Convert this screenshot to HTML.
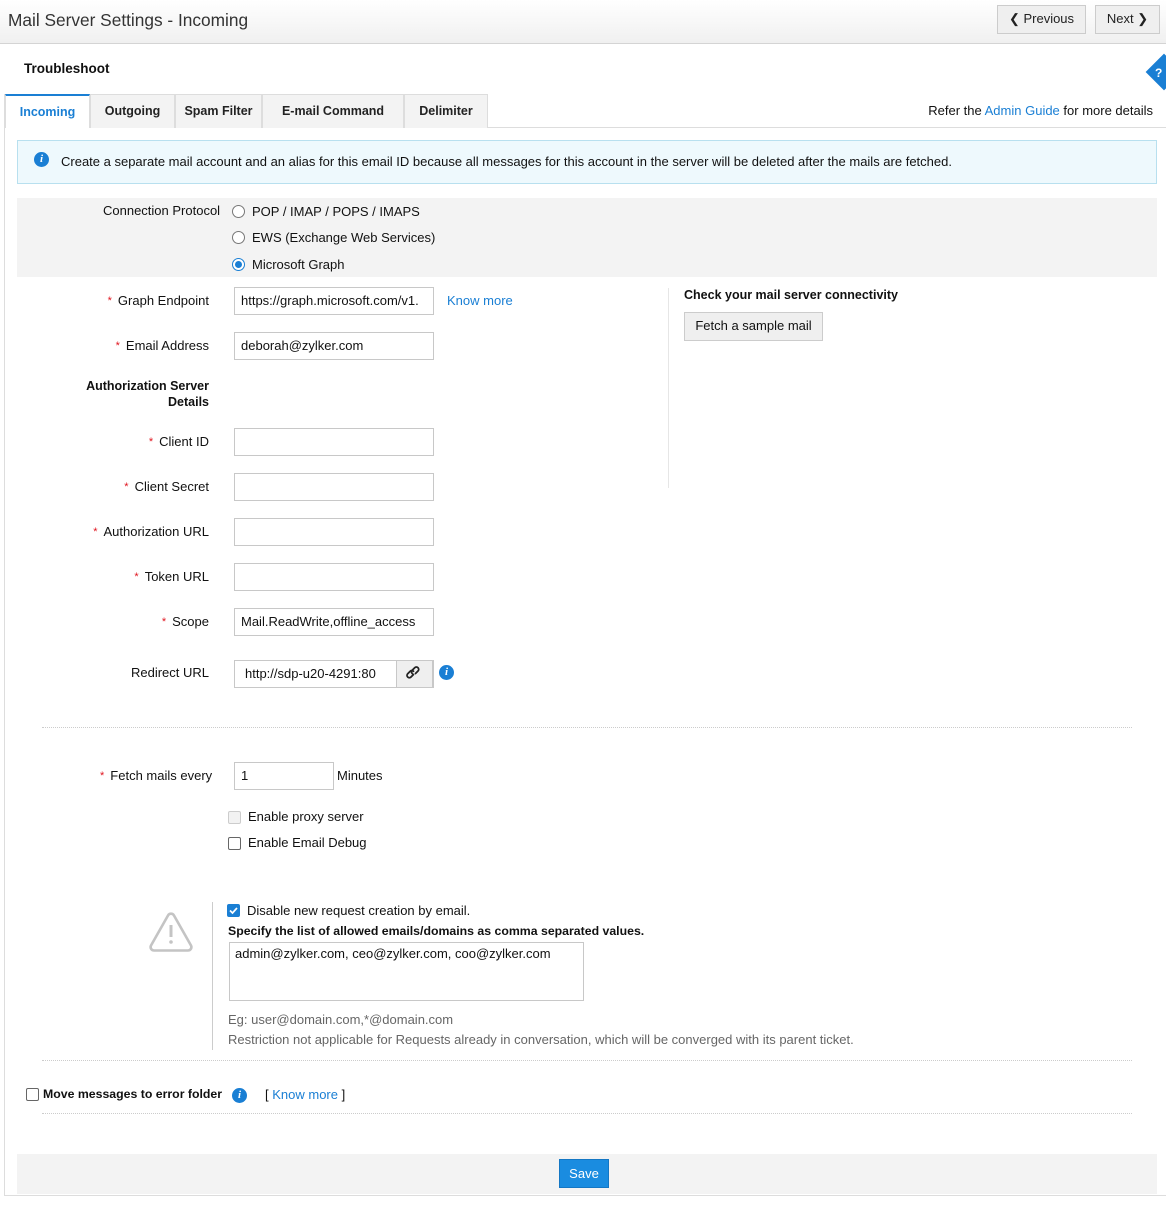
<!DOCTYPE html>
<html><head><meta charset="utf-8">
<style>
*{box-sizing:border-box;margin:0;padding:0}
body{width:1166px;height:1208px;position:relative;background:#fff;font-family:"Liberation Sans",Arial,sans-serif;font-size:13px;color:#111;overflow:hidden}
.a{position:absolute;white-space:nowrap}
.lbl{position:absolute;right:957px;white-space:nowrap;line-height:16px}
.req{color:#e0141e;font-size:11px;margin-right:6px;position:relative;top:-1px}
.inp{position:absolute;left:234px;width:200px;height:28px;border:1px solid #c8c8c8;background:#fff;padding:0 6px;line-height:26px;white-space:nowrap;overflow:hidden}
.btn{position:absolute;border:1px solid #ccc;background:#efefef;line-height:26px;text-align:center}
.tab{position:absolute;top:94px;height:34px;background:#f3f3f3;border:1px solid #ddd;border-bottom:none;font-weight:bold;font-size:12.5px;text-align:center;line-height:32px;color:#222}
.radio{position:absolute;left:232px;width:13px;height:13px;border:1px solid #777;border-radius:50%;background:#fff}
.cb{position:absolute;width:13px;height:13px;border:1px solid #666;border-radius:2px;background:#fff}
.dot{position:absolute;left:42px;width:1090px;border-top:1px dotted #ccc}
.blue{color:#1a7fd4}
.info{position:absolute;width:15px;height:15px;border-radius:50%;background:#1a7fd4;color:#fff;font:italic bold 11px "Liberation Serif",serif;text-align:center;line-height:15px}
</style></head><body>
<div class="a" style="left:0;top:0;width:1166px;height:44px;background:linear-gradient(#fff,#f0f0f0);border-bottom:1px solid #d4d4d4"></div>
<div class="a" style="left:8px;top:10px;font-size:17.3px;color:#333">Mail Server Settings - Incoming</div>
<div class="btn" style="left:997px;top:5px;width:89px;height:29px;color:#222">&#10094; Previous</div>
<div class="btn" style="left:1095px;top:5px;width:65px;height:29px;color:#222">Next &#10095;</div>
<div class="a" style="left:24px;top:61px;font-size:13.5px;font-weight:bold">Troubleshoot</div>
<div class="a" style="left:1151px;top:59px;width:26px;height:26px;background:#1a7fd4;transform:rotate(45deg)"></div>
<div class="a" style="left:1155px;top:66px;color:#fff;font-weight:bold;font-size:12px">?</div>
<div class="a" style="left:4px;top:94px;width:1px;height:1102px;background:#ddd"></div>
<div class="a" style="left:4px;top:1195px;width:1162px;height:1px;background:#ddd"></div>
<div class="a" style="left:90px;top:127px;width:1076px;height:1px;background:#ddd"></div>
<div class="tab" style="left:5px;width:85px;background:#fff;border-top:2px solid #1a7fd4;color:#1a7fd4">Incoming</div>
<div class="tab" style="left:90px;width:85px">Outgoing</div>
<div class="tab" style="left:175px;width:87px">Spam Filter</div>
<div class="tab" style="left:262px;width:142px">E-mail Command</div>
<div class="tab" style="left:404px;width:84px">Delimiter</div>
<div class="a" style="right:13px;top:103px">Refer the <span class="blue">Admin Guide</span> for more details</div>
<div class="a" style="left:17px;top:140px;width:1140px;height:44px;background:#eef9fd;border:1px solid #b8e0ef"></div>
<div class="info" style="left:34px;top:152px">i</div>
<div class="a" style="left:61px;top:154px">Create a separate mail account and an alias for this email ID because all messages for this account in the server will be deleted after the mails are fetched.</div>
<div class="a" style="left:17px;top:198px;width:1140px;height:79px;background:#f3f3f3"></div>
<div class="a" style="left:103px;top:203px">Connection Protocol</div>
<div class="radio" style="top:205px"></div><div class="a" style="left:252px;top:204px">POP / IMAP / POPS / IMAPS</div>
<div class="radio" style="top:231px"></div><div class="a" style="left:252px;top:230px">EWS (Exchange Web Services)</div>
<div class="radio" style="top:258px;border-color:#1a7fd4"><div style="position:absolute;left:2px;top:2px;width:7px;height:7px;border-radius:50%;background:#1a7fd4"></div></div><div class="a" style="left:252px;top:257px">Microsoft Graph</div>
<div class="lbl" style="top:293px"><span class="req">*</span>Graph Endpoint</div>
<div class="inp" style="top:287px">https://graph.microsoft.com/v1.</div>
<div class="a blue" style="left:447px;top:293px">Know more</div>
<div class="lbl" style="top:338px"><span class="req">*</span>Email Address</div>
<div class="inp" style="top:332px">deborah@zylker.com</div>
<div class="lbl" style="top:378px;font-weight:bold;font-size:12.5px;text-align:right;line-height:16px">Authorization Server<br>Details</div>
<div class="lbl" style="top:434px"><span class="req">*</span>Client ID</div><div class="inp" style="top:428px"></div>
<div class="lbl" style="top:479px"><span class="req">*</span>Client Secret</div><div class="inp" style="top:473px"></div>
<div class="lbl" style="top:524px"><span class="req">*</span>Authorization URL</div><div class="inp" style="top:518px"></div>
<div class="lbl" style="top:569px"><span class="req">*</span>Token URL</div><div class="inp" style="top:563px"></div>
<div class="lbl" style="top:614px"><span class="req">*</span>Scope</div><div class="inp" style="top:608px">Mail.ReadWrite,offline_access</div>
<div class="lbl" style="top:665px">Redirect URL</div>
<div class="inp" style="top:660px;padding-left:10px">http://sdp-u20-4291:80</div>
<div class="a" style="left:396px;top:660px;width:37px;height:28px;background:#efefef;border:1px solid #c8c8c8">
<svg width="35" height="26" viewBox="0 0 35 26"><g fill="none" stroke="#222" stroke-width="1.8" stroke-linecap="round"><path d="M16.5 13.5l-2.5 2.5a2.3 2.3 0 0 1-3.3-3.3l2.5-2.5a2.3 2.3 0 0 1 3.3 0"/><path d="M18.5 12.5l2.5-2.5a2.3 2.3 0 0 0-3.3-3.3l-2.5 2.5a2.3 2.3 0 0 0 0 3.3"/></g></svg></div>
<div class="info" style="left:439px;top:665px">i</div>
<div class="a" style="left:668px;top:288px;width:1px;height:200px;background:#e6e6e6"></div>
<div class="a" style="left:684px;top:288px;font-weight:bold;font-size:12.5px">Check your mail server connectivity</div>
<div class="btn" style="left:684px;top:312px;width:139px;height:29px">Fetch a sample mail</div>
<div class="dot" style="top:727px"></div>
<div class="a" style="left:100px;top:768px"><span class="req">*</span>Fetch mails every</div>
<div class="inp" style="top:762px;width:100px">1</div>
<div class="a" style="left:337px;top:768px">Minutes</div>
<div class="cb" style="left:228px;top:811px;border-color:#ccc;background:#f2f2f2"></div><div class="a" style="left:248px;top:809px">Enable proxy server</div>
<div class="cb" style="left:228px;top:837px"></div><div class="a" style="left:248px;top:835px">Enable Email Debug</div>
<svg class="a" style="left:148px;top:911px" width="46" height="42" viewBox="0 0 46 42"><path d="M20 4.5a3.4 3.4 0 0 1 6 0l17 30a3.4 3.4 0 0 1-3 5H6a3.4 3.4 0 0 1-3-5z" fill="none" stroke="#c4c4c4" stroke-width="2.6"/><path d="M23 14v12" stroke="#c4c4c4" stroke-width="3"/><circle cx="23" cy="31" r="1.8" fill="#c4c4c4"/></svg>
<div class="a" style="left:212px;top:902px;width:1px;height:148px;background:#ccc"></div>
<div class="cb" style="left:227px;top:904px;background:#1a7fd4;border-color:#1a7fd4"><svg width="11" height="11" viewBox="0 0 11 11" style="position:absolute;left:0;top:0"><path d="M2 5.5l2.5 2.5 4.5-5" fill="none" stroke="#fff" stroke-width="1.7"/></svg></div>
<div class="a" style="left:247px;top:903px">Disable new request creation by email.</div>
<div class="a" style="left:228px;top:924px;font-weight:bold;font-size:12.3px">Specify the list of allowed emails/domains as comma separated values.</div>
<div class="a" style="left:229px;top:942px;width:355px;height:59px;border:1px solid #c8c8c8;padding:3px 5px">admin@zylker.com, ceo@zylker.com, coo@zylker.com</div>
<div class="a" style="left:228px;top:1012px;color:#666">Eg: user@domain.com,*@domain.com</div>
<div class="a" style="left:228px;top:1032px;color:#666">Restriction not applicable for Requests already in conversation, which will be converged with its parent ticket.</div>
<div class="dot" style="top:1060px"></div>
<div class="cb" style="left:26px;top:1088px"></div>
<div class="a" style="left:43px;top:1087px;font-weight:bold;font-size:12.3px">Move messages to error folder</div>
<div class="info" style="left:232px;top:1088px">i</div>
<div class="a" style="left:265px;top:1087px">[ <span class="blue">Know more</span> ]</div>
<div class="dot" style="top:1113px"></div>
<div class="a" style="left:17px;top:1154px;width:1140px;height:40px;background:#f3f3f3"></div>
<div class="a" style="left:559px;top:1159px;width:50px;height:29px;background:#1a8ce0;border:1px solid #1477c4;color:#fff;text-align:center;line-height:27px">Save</div>
</body></html>
